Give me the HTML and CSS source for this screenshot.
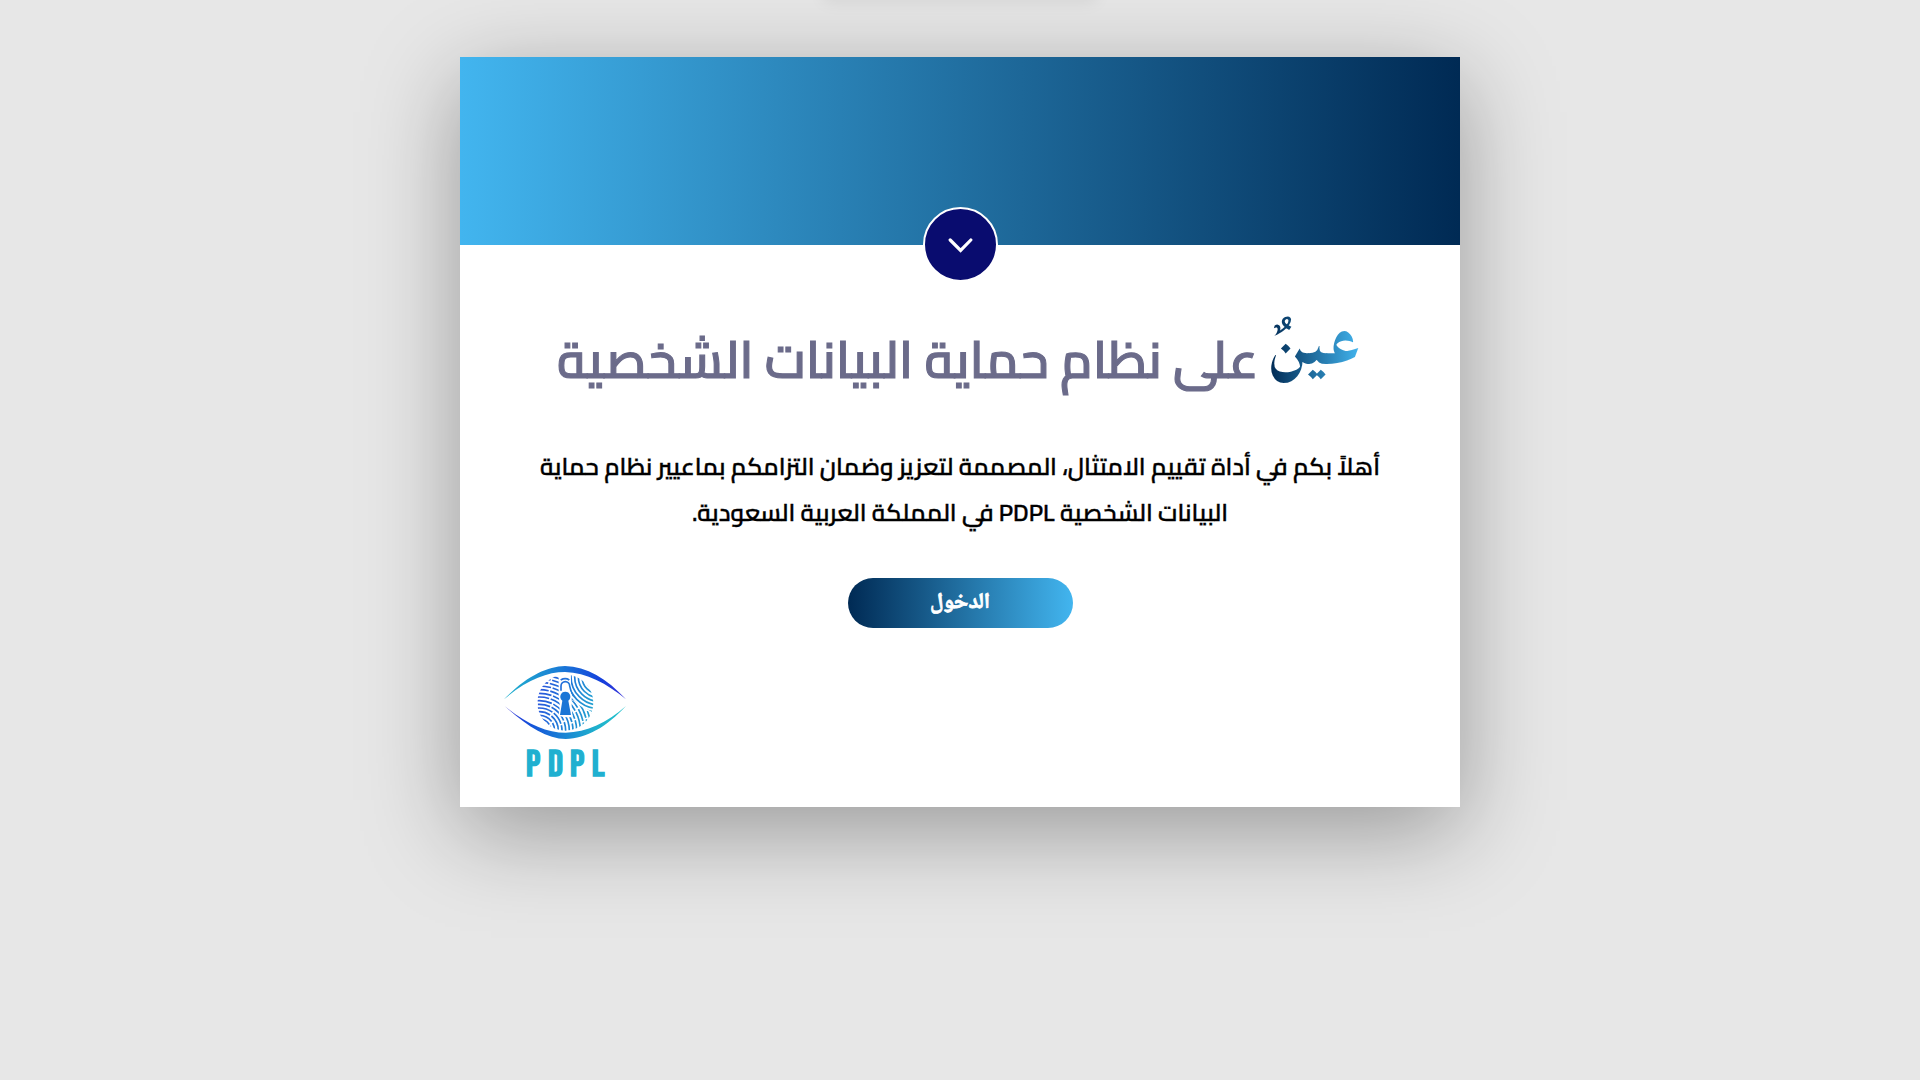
FILE: index.html
```html
<!DOCTYPE html>
<html lang="ar" dir="rtl">
<head>
<meta charset="utf-8">
<title>PDPL</title>
<link rel="stylesheet" href="styles.css">
</head>
<body>
<div class="toast"></div>
<main class="card">
  <header class="banner">
    <div class="badge">
      <svg viewBox="0 0 26 16" width="26" height="16"><path d="M3.2 3 L13.6 13.4 L23.8 3" fill="none" stroke="#fff" stroke-width="3.2" stroke-linecap="round"/></svg>
    </div>
  </header>
  <section class="content">
    <h1 class="title"><span class="eye-word">عينٌ</span> على نظام حماية البيانات الشخصية</h1>
    <p class="intro">أهلاً بكم في أداة تقييم الامتثال، المصممة لتعزيز وضمان التزامكم بماعيير نظام حماية البيانات الشخصية PDPL في المملكة العربية السعودية.</p>
    <button class="enter">الدخول</button>
  </section>
  <footer class="brand">
    <svg class="logo" viewBox="0 0 390 390" width="130" height="130" direction="ltr">
      <defs>
        <linearGradient id="top"><stop offset="0" stop-color="#20b3cd"/><stop offset=".45" stop-color="#1a7dd6"/><stop offset=".8" stop-color="#1540dc"/><stop offset="1" stop-color="#3a30d8"/></linearGradient>
        <linearGradient id="bottom"><stop offset="0" stop-color="#3a30d8"/><stop offset=".2" stop-color="#1550da"/><stop offset=".5" stop-color="#1a86d4"/><stop offset=".75" stop-color="#1fb0cd"/><stop offset="1" stop-color="#25c4cc"/></linearGradient>
        <linearGradient id="print" gradientUnits="userSpaceOnUse" x1="112" y1="100" x2="280" y2="150"><stop offset="0" stop-color="#2b56dc"/><stop offset=".5" stop-color="#1f78d8"/><stop offset="1" stop-color="#24a4d0"/></linearGradient>
        <clipPath id="left"><path d="M112 44 H176 V104 L182 165 L190 172 H215 V120 L285 168 V214 H112Z"/></clipPath>
        <clipPath id="right"><path d="M212 44 H282 V160 L214 118Z"/></clipPath>
        <clipPath id="disc"><circle cx="196" cy="128" r="84"/></clipPath>
      </defs>
      <path fill="url(#top)" d="M12 118C80 48 140 20 195 18C260 20 320 55 378 118C320 70 260 38 195 36C140 36 80 60 12 118Z"/>
      <path fill="url(#bottom)" d="M14 138C80 198 140 236 197 237C260 236 320 200 378 138C320 188 260 217 197 218C140 218 80 192 14 138Z"/>
      <g clip-path="url(#disc)" fill="none" stroke="url(#print)" stroke-width="5">
        <g clip-path="url(#left)" stroke-dasharray="54 5 38 5">
          <circle cx="118" cy="212" r="24"/><circle cx="118" cy="212" r="35"/><circle cx="118" cy="212" r="46"/><circle cx="118" cy="212" r="57"/><circle cx="118" cy="212" r="68"/><circle cx="118" cy="212" r="79"/><circle cx="118" cy="212" r="90"/><circle cx="118" cy="212" r="101"/><circle cx="118" cy="212" r="112"/><circle cx="118" cy="212" r="123"/><circle cx="118" cy="212" r="134"/><circle cx="118" cy="212" r="145"/><circle cx="118" cy="212" r="156"/><circle cx="118" cy="212" r="167"/>
        </g>
        <g clip-path="url(#right)">
          <circle cx="298" cy="50" r="30"/><circle cx="298" cy="50" r="41"/><circle cx="298" cy="50" r="52"/><circle cx="298" cy="50" r="63"/><circle cx="298" cy="50" r="74"/><circle cx="298" cy="50" r="85"/><circle cx="298" cy="50" r="96"/><circle cx="298" cy="50" r="107"/>
        </g>
        <path d="M183 92V78a13 13 0 0 1 26 0q2 16 12 30M182 60q14-8 26 0"/>
      </g>
      <path d="M196 95a15 15 0 0 1 9 27L213 165H180L187 122a15 15 0 0 1 9-27Z" fill="none" stroke="#fff" stroke-width="9"/>
      <path d="M196 95a15 15 0 0 1 9 27L213 165H180L187 122a15 15 0 0 1 9-27Z" fill="#1b76d6"/>
      <text class="logo-text" x="78 144 210 275" y="348">PDPL</text>
    </svg>
  </footer>
</main>
</body>
</html>
```
FILE: styles.css
```css
* { box-sizing: border-box; }
body { margin: 0; min-height: 100vh; padding-top: 57px; background: #e7e7e7; font-family: Cairo, "Noto Sans", sans-serif; }
.toast { position: absolute; top: -60px; left: 50%; width: 272px; height: 60px; margin-left: -136px; box-shadow: 0 1px 16px rgba(0, 0, 0, .08); }
.card { display: flex; flex-direction: column; width: 1000px; height: 750px; margin: 0 auto; background: #fff; box-shadow: 0 24px 88px rgba(0, 0, 0, .34); }
.banner { display: flex; flex: none; align-items: flex-end; justify-content: center; height: 188px; background: linear-gradient(to right, #42b5ef, #002a54); }
.badge { display: flex; flex: none; align-items: center; justify-content: center; width: 75px; height: 75px; margin-bottom: -37px; border: 2px solid #fff; border-radius: 50%; background: #090c6f; }
.content { display: flex; flex: none; flex-direction: column; align-items: center; padding: 66px 70px 0; }
.title { height: 96px; margin: 0 3px 0 0; font-size: 51.2px; font-weight: 600; line-height: 96px; color: #6b6b8a; -webkit-text-stroke: 1.1px #6b6b8a; white-space: nowrap; }
.eye-word { font-family: Lateef, serif; font-weight: 700; font-size: 86px; line-height: 0; vertical-align: 14px; -webkit-text-stroke: 0; background: linear-gradient(to right, #002a54, #42b5ef); -webkit-background-clip: text; background-clip: text; color: transparent; }
.intro { width: 860px; margin: 37px 0 43px; font-size: 24.18px; font-weight: 600; line-height: 45.5px; text-align: center; color: #000; -webkit-text-stroke: .4px #000; }
.enter { width: 225px; height: 50px; padding: 0; border: 0; border-radius: 25px; font: 700 22px "Noto Naskh Arabic", serif; -webkit-text-stroke: .8px #fff; color: #fff; background: linear-gradient(to left, #42b5ef, #002a54); }
.brand { display: flex; justify-content: flex-end; padding: 32px 0 0 40px; }
.logo { display: block; }
.logo-text { font-family: "Bebas Neue", "Liberation Sans Narrow", sans-serif; font-size: 111px; fill: #20b0d0; stroke: #20b0d0; stroke-width: 4; }
```
